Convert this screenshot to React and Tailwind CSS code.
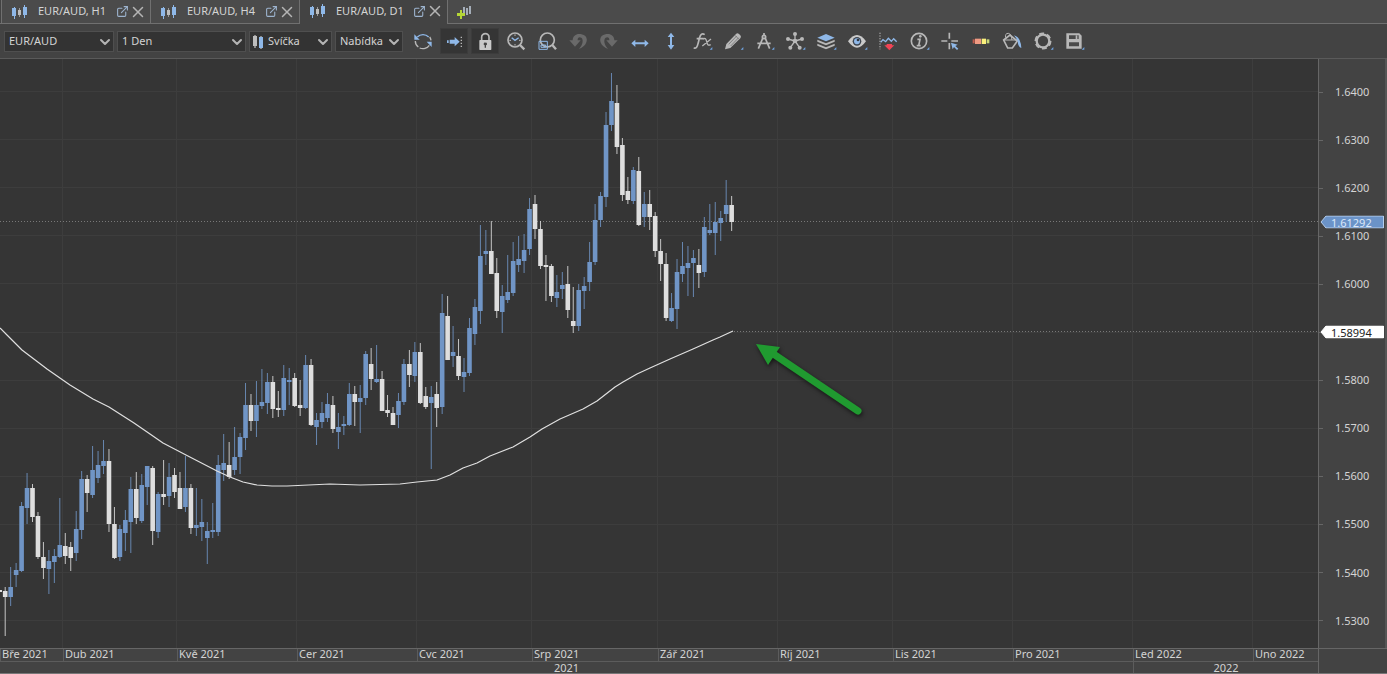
import { clsx } from "clsx";
import { ChevronDown, ExternalLink, X } from "lucide-react";

// high, body top, body bottom, low - w is a falling day, b a rising one
const CANDLES = `
w 587 591 597 636|b 567 587 597 606|b 563 570 575 587|b 502 506 571 572|b 473 488 508 524|w 484 488 517 522
w 512 516 557 559|w 542 557 568 579|b 550 561 569 594|b 549 556 562 583|b 498 545 557 558|w 533 546 556 564
w 542 547 558 571|b 511 529 553 561|b 471 479 530 539|w 475 479 493 512|b 446 470 495 498|b 451 465 478 483
b 440 461 466 474|w 449 461 524 532|w 507 524 558 559|b 525 529 557 561|b 510 520 533 551|b 477 489 522 553
w 472 489 518 524|b 474 485 521 523|b 466 466 487 505|w 466 468 531 545|b 492 494 532 538|w 460 494 497 505
b 463 477 496 507|w 468 475 492 498|w 472 488 509 509|b 456 488 507 512|w 484 488 528 534|b 488 525 528 536
b 499 522 527 541|b 522 531 538 564|b 503 530 532 538|b 455 465 532 536|b 434 463 470 481|w 442 465 477 479
b 427 457 470 475|b 433 437 457 474|b 383 405 438 450|w 394 405 421 431|b 381 405 421 437|b 369 402 406 409
b 373 382 403 414|w 376 382 409 418|w 391 408 410 417|b 365 378 410 416|b 368 380 382 405|w 373 378 406 407
w 380 405 408 416|b 355 365 408 409|w 359 365 425 426|b 413 420 427 445|b 402 413 422 428|b 393 404 418 422
w 396 405 429 433|b 413 427 432 449|b 416 424 426 435|b 383 394 425 426|w 386 394 402 426|b 385 398 402 433
b 351 354 398 405|w 348 364 379 390|b 345 379 382 383|w 371 379 411 411|w 395 410 413 417|w 407 413 425 425
b 393 401 415 428|b 359 364 402 405|w 350 364 375 387|b 342 352 376 382|w 343 352 403 404|w 387 396 407 409
b 386 397 403 469|w 382 394 408 427|b 294 313 407 414|w 296 316 360 360|b 326 352 356 367|w 339 356 376 380
b 358 372 377 392|b 318 328 373 376|b 299 307 334 345|b 225 256 311 324|b 230 251 254 265|w 221 251 274 274
w 258 273 311 318|b 285 296 312 333|b 255 292 300 303|b 242 261 293 296|b 236 259 265 272|b 234 250 261 273
b 198 209 249 255|w 195 204 229 239|w 221 229 266 269|w 255 265 267 301|w 264 266 296 302|b 275 292 298 307
b 272 285 289 299|w 266 284 310 318|w 287 321 326 333|b 284 290 326 331|b 277 286 291 309|b 242 262 282 291
b 204 220 262 265|b 192 196 220 227|b 112 125 197 207|b 73 101 125 131|w 85 103 147 154|w 138 145 195 201
w 177 191 200 204|b 167 170 201 204|w 157 171 225 226|b 192 204 217 227|w 190 204 217 230|w 212 216 251 257
w 239 251 264 281|w 253 264 318 321|b 293 308 321 322|b 259 272 309 329|b 242 266 274 282|b 246 263 268 296
b 250 258 263 297|w 249 265 273 288|b 217 227 272 277|b 204 230 233 235|b 202 222 233 255|b 211 218 223 241
b 180 205 214 222|w 196 205 222 231`
  .trim()
  .split(/[|\n]/)
  .map((row) => {
    const [kind, ...values] = row.split(" ");
    const [high, top, bottom, low] = values.map((v) => Number(v) - 59);
    return { up: kind === "b", high, top, bottom, low };
  });

const AVERAGE =
  "0,269 7,276 22,291 47,310 70,326 93,340 109,348 134,364 150,375 163,384 186,396 217,412 230,418 243,423 257,426 272,427 287,427 330,425 360,426 400,425 417,423 437,421 450,416 463,409 477,404 490,397 513,388 530,378 542,370 560,360 583,350 597,342 615,328 623,323 637,315 650,309 670,300 693,290 713,281 720,278 733,272";

const PRICES = [
  "1.6400", "1.6300", "1.6200", "1.6100", "1.6000", "",
  "1.5800", "1.5700", "1.5600", "1.5500", "1.5400", "1.5300",
];

const MONTHS = [
  "Bře 2021", "Dub 2021", "Kvě 2021", "Cer 2021", "Cvc 2021", "Srp 2021",
  "Zář 2021", "Ríj 2021", "Lis 2021", "Pro 2021", "Led 2022", "Uno 2022",
];

const MONTH_LINES = [63, 177, 297, 417, 532, 658, 778, 893, 1013, 1133, 1253];

const GRAY = "#b8b8b8";
const BLUE = "#8fb8e8";

const TOOLS = [
  {
    name: "Obnovit",
    icon: (
      <g fill="none" strokeWidth="4">
        <path d="M13 18a23 22 0 0 1 34 0" stroke={BLUE} />
        <path d="M7 30a23 22 0 0 0 9 18M20 51a23 22 0 0 0 29-8M50 18a23 22 0 0 1 4 10" stroke={GRAY} />
        <path d="M4 10v16h16zM56 48V32H41z" fill={BLUE} />
      </g>
    ),
  },
  {
    name: "Posun grafu",
    pressed: true,
    icon: (
      <g fill={BLUE}>
        <path d="M17 26h15v-8l15 14-15 14v-8H17zM9 28h5v8H9z" />
        <path d="M50 17h4v4h-4zM50 26h4v4h-4zM50 35h4v4h-4zM50 44h4v4h-4z" fill={GRAY} />
      </g>
    ),
  },
  {
    name: "Zámek",
    pressed: true,
    icon: (
      <g>
        <path d="M20 28V18a11 10 0 0 1 22 0v10" fill="none" stroke={GRAY} strokeWidth="5" />
        <rect x="13" y="27" width="36" height="30" rx="2" fill="#cacaca" />
        <path d="M31 35a4 4 0 0 1 2 8v7h-4v-7a4 4 0 0 1 2-8z" fill="#444" />
      </g>
    ),
  },
  {
    name: "Přiblížit čas",
    icon: (
      <g fill="none" stroke={GRAY} strokeWidth="5">
        <circle cx="27" cy="27" r="21" />
        <path d="m42 42 13 13" strokeWidth="7" />
        <path d="m17 20 10 8 11-8" stroke={BLUE} strokeWidth="4" />
        <path d="M27 10v5M27 39v5M10 28h5M39 28h5" strokeWidth="3" />
      </g>
    ),
  },
  {
    name: "Přiblížit oblast",
    icon: (
      <g fill="none" stroke={GRAY} strokeWidth="5">
        <circle cx="31" cy="27" r="21" />
        <path d="m46 42 11 13" strokeWidth="7" />
        <path d="M6 31h25v24H6z" stroke={BLUE} strokeWidth="3" />
        <path d="M12 42h14v7H12z" stroke={BLUE} strokeWidth="3" />
      </g>
    ),
  },
  {
    name: "Zpět",
    icon: (
      <path d="M52 15c-18-12-38-5-38 13H4l17 19 17-19h-9c-1-8 5-12 11-8 7 6 5 20-7 34 22-8 29-28 19-39z" fill="#6a6a6a" />
    ),
  },
  {
    name: "Znovu",
    icon: (
      <path d="M8 15c18-12 38-5 38 13h10L39 47 22 28h9c1-8-5-12-11-8-7 6-5 20 7 34C5 46-2 26 8 15z" fill="#6a6a6a" />
    ),
  },
  {
    name: "Vodorovně",
    icon: <path d="M4 37 16 26v8h28v-8l12 11-12 11v-8H16v8z" fill={BLUE} />,
  },
  {
    name: "Svisle",
    icon: <path d="m30 5 10 13h-7v24h7L30 56 20 42h7V18h-7z" fill={BLUE} />,
  },
  {
    name: "Indikátory",
    menu: true,
    icon: (
      <g fill="none" stroke={GRAY} strokeWidth="5">
        <path d="M5 51c8 2 11-4 13-13l5-19c2-9 8-13 15-8M14 23h21" />
        <path d="M33 24c7-4 9 0 11 8s4 13 12 9M57 24 31 45" strokeWidth="4" />
      </g>
    ),
  },
  {
    name: "Kreslení",
    menu: true,
    icon: (
      <g>
        <path d="m6 55 4-16 29-30q4-5 9 0l4 4q4 5 0 9L22 51z" fill={GRAY} />
        <path d="m17 40 24-25M23 45l24-25M36 13l12 12" stroke="#666" strokeWidth="2" />
      </g>
    ),
  },
  {
    name: "Měření",
    menu: true,
    icon: (
      <g fill="none" stroke={GRAY} strokeWidth="5">
        <path d="M30 6v8M27 20 13 53M33 20l14 33M10 37h40" />
        <circle cx="30" cy="18" r="5" />
      </g>
    ),
  },
  {
    name: "Vzory",
    menu: true,
    icon: (
      <g stroke={GRAY} strokeWidth="4">
        <path d="M30 30V10M30 30 9 24M30 30l21-6M30 30 16 50M30 30l14 20" />
        <g fill={GRAY} stroke="none">
          <circle cx="30" cy="30" r="7" />
          <circle cx="30" cy="9" r="6" />
          <circle cx="9" cy="24" r="6" />
          <circle cx="51" cy="24" r="6" />
          <circle cx="16" cy="50" r="6" />
          <circle cx="44" cy="50" r="6" />
        </g>
      </g>
    ),
  },
  {
    name: "Vrstvy",
    menu: true,
    icon: (
      <g fill={GRAY}>
        <path d="m30 9 26 11-26 11L4 20z" fill={BLUE} />
        <path d="m4 26 26 11 26-11v6L30 43 4 32z" />
        <path d="m4 38 26 11 26-11v6L30 55 4 44z" />
      </g>
    ),
  },
  {
    name: "Zobrazení",
    menu: true,
    icon: (
      <g>
        <path d="M3 31q27-38 54 0-27 38-54 0z" fill="#cacaca" />
        <circle cx="30" cy="31" r="13" fill="#3f4650" />
        <circle cx="30" cy="31" r="9" fill={BLUE} />
        <circle cx="33" cy="27" r="4" fill="#33383f" />
      </g>
    ),
  },
  {
    name: "Upozornění",
    icon: (
      <g fill="none">
        <path d="M6 5v50" stroke={GRAY} strokeWidth="3" strokeDasharray="4 4" />
        <path d="m8 34 7-8 8 6 8-10 9 9 7-8 9 9" stroke={BLUE} strokeWidth="4" />
        <path d="M19 43h7v-4h16v4h7L34 58z" fill="#f04455" />
      </g>
    ),
  },
  {
    name: "Informace",
    menu: true,
    icon: (
      <g>
        <circle cx="30" cy="30" r="23" fill="none" stroke={GRAY} strokeWidth="5" />
        <path d="M25 25h8l-4 19h6M23 44h7" fill="none" stroke={GRAY} strokeWidth="5" />
        <circle cx="34" cy="16" r="4" fill={GRAY} />
      </g>
    ),
  },
  {
    name: "Kurzor",
    icon: (
      <g>
        <path d="M28 5v18M28 36v19M4 30h18M34 30h20" stroke={GRAY} strokeWidth="5" />
        <path d="m33 35 20 6-7 4 9 8-4 4-9-9-4 7z" fill={BLUE} />
      </g>
    ),
  },
  {
    name: "Barvy",
    icon: (
      <g>
        <path d="M5 25h6v12H5z" fill="#c25a4c" />
        <path d="M12 23h18v16H12z" fill="#f09a82" />
        <path d="M32 23h13v16H32z" fill="#fbf07c" />
        <path d="M47 25h8v12h-8z" fill="#c9d977" />
      </g>
    ),
  },
  {
    name: "Výplň",
    icon: (
      <g fill="none" stroke={GRAY} strokeWidth="5">
        <path d="m5 27 19-15 22 18-15 21H17z" />
        <path d="M5 27h40" strokeWidth="3" />
        <path d="M11 20q-3-13 8-13 8 0 11 20" strokeWidth="3" />
        <path d="M36 13q20 5 22 38-10-3-11-20-3-9-11-18z" fill={BLUE} stroke="none" />
      </g>
    ),
  },
  {
    name: "Nastavení",
    menu: true,
    icon: (
      <g fill="none" stroke={GRAY}>
        <circle cx="30" cy="30" r="19" strokeWidth="7" />
        <circle cx="30" cy="30" r="23" strokeWidth="5" strokeDasharray="15 9" />
      </g>
    ),
  },
  {
    name: "Uložit",
    menu: true,
    icon: (
      <g>
        <path d="M7 7h39l7 7v39H7z" fill={GRAY} />
        <path d="M15 13h29v11H15zM15 34h30v12H15z" fill="#4a4a4a" />
        <path d="M35 13h5v11h-5z" fill={GRAY} />
      </g>
    ),
  },
];

function CandleIcon() {
  return (
    <svg viewBox="0 0 16 16" className="h-4 w-4 shrink-0" aria-hidden="true">
      <path d="M3 3h1v12H3zM13 1h1v13h-1z" fill="#8fb8e8" />
      <path d="M1 4h4v8H1zM12 3h4v8h-4z" fill="#8fb8e8" />
      <path d="M8 4h1v9H8z" fill="#9a9a9a" />
      <path d="M7 6h3v5H7z" fill="#bdbdbd" />
    </svg>
  );
}

function Tab({ label, active }) {
  return (
    <div
      className={clsx(
        "flex h-6 items-center border-r border-[#707070] pl-[9px]",
        active ? "w-[148px] pb-[2px]" : "w-[149px] border-b bg-[#4b4b4b]"
      )}
    >
      <button className="flex items-center gap-[11px] whitespace-nowrap">
        <CandleIcon />
        {label}
      </button>
      <button aria-label={`Odpojit ${label}`} className="ml-auto">
        <ExternalLink size={13} color="#9db4cf" />
      </button>
      <button aria-label={`Zavřít ${label}`} className="mr-[3px]">
        <X size={18} color="#b4b4b4" />
      </button>
    </div>
  );
}

function Select({ label, value, className, children }) {
  return (
    <div className={clsx("relative h-[21px] border border-[#4f4f4f] bg-[#333]", className)}>
      {children}
      <select
        aria-label={label}
        className={clsx("h-full w-full appearance-none bg-transparent pr-4 outline-none", children ? "pl-[18px]" : "pl-1")}
      >
        <option>{value}</option>
      </select>
      <ChevronDown
        size={16}
        strokeWidth={3}
        color="#b4b4b4"
        className="pointer-events-none absolute top-[2px] right-0"
      />
    </div>
  );
}

function ToolButton({ name, icon, pressed, menu }) {
  return (
    <button
      aria-label={name}
      className={clsx("flex h-[26px] w-7 shrink-0 items-center justify-center", pressed && "border border-[#3c3c3c] bg-[#353535]")}
    >
      <svg viewBox="0 0 60 60" className="h-5 w-5 overflow-visible">
        {icon}
        {menu && <path d="M61 48v8h-8z" fill="#6fa3e0" />}
      </svg>
    </button>
  );
}

function Chart() {
  return (
    <svg viewBox="0 0 1318 589" className="block w-full bg-[#353535]" role="img" aria-label="EUR/AUD D1">
      <g stroke="#3d3d3d" shapeRendering="crispEdges">
        {PRICES.map((price, i) => (
          <line key={i} x1="0" x2="1318" y1={32.5 + i * 48.1} y2={32.5 + i * 48.1} />
        ))}
        {MONTH_LINES.map((x) => (
          <line key={x} x1={x - 0.5} x2={x - 0.5} y1="0" y2="589" />
        ))}
      </g>

      <g stroke="#787878" strokeDasharray="1 2" shapeRendering="crispEdges">
        <path d="M0 162.5H1318M734 272.5H1318" />
      </g>

      <rect x="0" y="531" width="2" height="2" fill="#dedede" />
      {CANDLES.map((candle, i) => {
        const x = 5.2 + i * 5.462;
        const color = candle.up ? "#7095c6" : "#dedede";
        return (
          <g key={i}>
            <line x1={x} x2={x} y1={candle.high} y2={candle.low} stroke={color} strokeWidth="1" opacity="0.85" />
            <rect x={x - 2.3} y={candle.top} width="4.6" height={Math.max(candle.bottom - candle.top, 1)} fill={color} />
          </g>
        );
      })}

      <polyline points={AVERAGE} fill="none" stroke="#e0e0e0" strokeWidth="1.2" strokeLinejoin="round" />

      <g className="drop-shadow-[1px_2px_2px_rgba(0,0,0,0.6)]">
        <path d="M772 294 858 352" stroke="#209a30" strokeWidth="7" strokeLinecap="round" />
        <path d="M756 285 780 288 768 306z" fill="#209a30" />
      </g>
    </svg>
  );
}

function PriceTag({ value, className, fill, stroke }) {
  return (
    <div className={clsx("absolute right-px left-px h-[13px] -translate-y-1/2", className)}>
      <svg viewBox="0 0 64 13" preserveAspectRatio="none" className="absolute inset-0 h-full w-full">
        <path d="M1 6.5 6 .5h57.5v12H6z" fill={fill} stroke={stroke} />
      </svg>
      <span className="relative block pl-[11px] leading-[13px]">{value}</span>
    </div>
  );
}

function PriceAxis() {
  return (
    <div className="relative flex w-[67px] shrink-0 flex-col border-l border-[#666] pt-[9px] pb-[3px]">
      {PRICES.map((price, i) => (
        <div key={i} className="flex flex-1 items-center gap-3">
          <span className="h-px w-1 bg-[#666]" />
          <span>{price}</span>
        </div>
      ))}
      <PriceTag value="1.61292" className="top-[27.7%] text-[#dce8f8]" fill="#6b93c8" stroke="#b6cdea" />
      <PriceTag value="1.58994" className="top-[46.4%] text-[#222]" fill="#fff" stroke="#fff" />
    </div>
  );
}

function TimeAxis() {
  return (
    <div className="flex border-t border-[#666]">
      <div className="min-w-0 flex-1">
        <div className="grid h-[13px] grid-cols-[63fr_114fr_120fr_120fr_115fr_126fr_120fr_115fr_120fr_120fr_120fr_65fr] border-b border-[#5c5c5c] leading-[10px]">
          {MONTHS.map((month) => (
            <div key={month} className="min-w-0 border-l border-[#5c5c5c] pl-px whitespace-nowrap">
              {month}
            </div>
          ))}
        </div>
        <div className="grid h-[11px] grid-cols-[1133fr_185fr] text-center leading-[11px]">
          <div>2021</div>
          <div className="border-l border-[#5c5c5c]">2022</div>
        </div>
      </div>
      <div className="w-[69px] shrink-0 border-l border-[#666]" />
    </div>
  );
}

export default function App() {
  return (
    <div className="border-b border-[#777] bg-[#434343] font-['Noto_Sans','Open_Sans',sans-serif] text-[11px] text-[#d4d4d4]">
      <div className="flex">
        <div className="w-[2px] border-r border-b border-[#707070]" />
        <Tab label="EUR/AUD, H1" />
        <Tab label="EUR/AUD, H4" />
        <Tab label="EUR/AUD, D1" active />
        <button aria-label="Nový graf" className="flex h-6 flex-1 items-center border-b border-[#707070] bg-[#4b4b4b] pl-2">
          <svg viewBox="0 0 16 16" className="h-4 w-4">
            <path d="M7 3h2v6H7zM10 4h2v7h-2zM13 2h2v8h-2z" fill="#a4adb8" />
            <path d="M4 6h2v9H4zM1 9h8v3H1z" fill="#b4d636" />
          </svg>
        </button>
      </div>

      <div className="flex h-[35px] items-center border-b border-[#5a5a5a] pl-1">
        <div className="flex gap-[3px]">
          <Select label="Symbol" value="EUR/AUD" className="w-[110px]" />
          <Select label="Perioda" value="1 Den" className="w-[129px]" />
          <Select label="Typ grafu" value="Svíčka" className="w-[83px]">
            <svg viewBox="0 0 12 16" className="pointer-events-none absolute top-[2px] left-[2px] h-4 w-3" aria-hidden="true">
              <path d="M2 1h2v13H2zM8 2h2v13H8z" fill="#8a8a8a" />
              <path d="M1 2h4v10H1z" fill="#bdbdbd" />
              <path d="M7 3h4v11H7z" fill="#8fb8e8" />
            </svg>
          </Select>
          <Select label="Strana ceny" value="Nabídka" className="w-[68px]" />
        </div>
        <div className="ml-[6px] flex gap-[3px]">
          {TOOLS.map((tool) => (
            <ToolButton key={tool.name} {...tool} />
          ))}
        </div>
      </div>

      <div className="flex">
        <div className="min-w-0 flex-1">
          <Chart />
        </div>
        <PriceAxis />
        <div className="w-[2px] bg-[#555]" />
      </div>
      <TimeAxis />
    </div>
  );
}
